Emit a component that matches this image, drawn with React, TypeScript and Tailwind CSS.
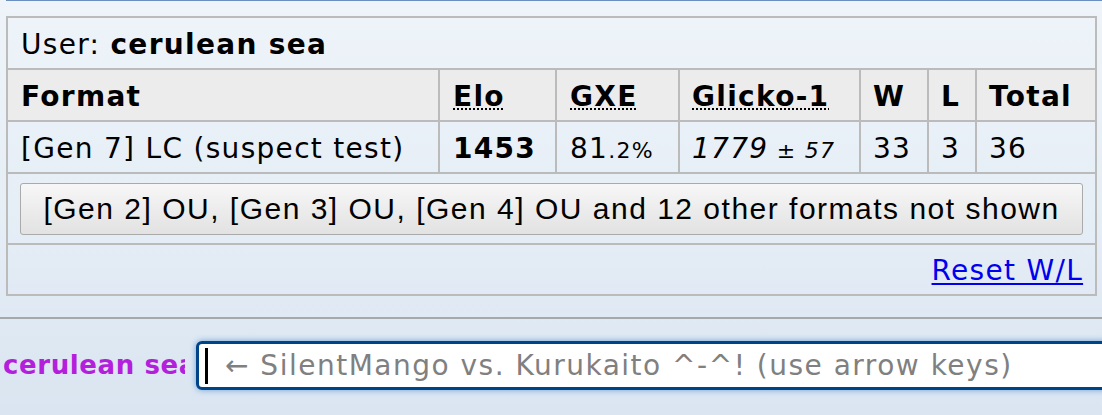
import React from "react";

const sans = { fontFamily: '"DejaVu Sans", Verdana, sans-serif' };

function Abbr({ children }: { children: React.ReactNode }) {
  return (
    <span className="underline decoration-dotted decoration-2 underline-offset-[3px]">{children}</span>
  );
}

export default function App() {
  return (
    <div
      className="relative h-[415px] w-[1102px] overflow-hidden bg-gradient-to-b from-[#eef4f9] via-[#e6eef6] to-[#dae5f1] text-[28px] tracking-[1.3px] text-black"
      style={sans}
    >
      {/* tail of the previous message box */}
      <div className="ml-[6px] h-px bg-[#6b8fc0]" />

      {/* ladder table */}
      <table className="ml-[6px] mt-[15px] w-[1089px] table-fixed border-collapse border-2 border-[#bbbbbb]">
        <colgroup>
          <col className="w-[432px]" />
          <col className="w-[117px]" />
          <col className="w-[123px]" />
          <col className="w-[181px]" />
          <col className="w-[68px]" />
          <col className="w-[48px]" />
          <col className="w-[120px]" />
        </colgroup>
        <tbody>
          <tr className="h-[52px]">
            <td colSpan={7} className="border-2 border-[#bbbbbb] px-[13px] pt-[3px] leading-none">
              User: <strong>cerulean sea</strong>
            </td>
          </tr>
          <tr className="h-[52px] bg-[#ececec] font-bold">
            <th className="border-2 border-[#bbbbbb] px-[13px] pt-[3px] text-left">Format</th>
            <th className="border-2 border-[#bbbbbb] px-[13px] pt-[3px] text-left"><Abbr>Elo</Abbr></th>
            <th className="border-2 border-[#bbbbbb] px-[13px] pt-[3px] text-left"><Abbr>GXE</Abbr></th>
            <th className="border-2 border-[#bbbbbb] px-[12px] pt-[3px] text-left"><Abbr>Glicko-1</Abbr></th>
            <th className="border-2 border-[#bbbbbb] px-[12px] pt-[3px] text-left">W</th>
            <th className="border-2 border-[#bbbbbb] px-[12px] pt-[3px] text-left">L</th>
            <th className="border-2 border-[#bbbbbb] px-[12px] pt-[3px] text-left">Total</th>
          </tr>
          <tr className="h-[52px] whitespace-nowrap">
            <td className="border-2 border-[#bbbbbb] px-[13px] pt-[3px]">[Gen 7] LC (suspect test)</td>
            <td className="border-2 border-[#bbbbbb] px-[13px] pt-[3px] font-bold">1453</td>
            <td className="border-2 border-[#bbbbbb] px-[13px] pt-[3px]">
              81<span className="text-[22px]">.2%</span>
            </td>
            <td className="border-2 border-[#bbbbbb] px-[12px] pt-[3px] italic">
              1779<span className="text-[22px]"> ± 57</span>
            </td>
            <td className="border-2 border-[#bbbbbb] px-[12px] pt-[3px]">33</td>
            <td className="border-2 border-[#bbbbbb] px-[12px] pt-[3px]">3</td>
            <td className="border-2 border-[#bbbbbb] px-[12px] pt-[3px]">36</td>
          </tr>
          <tr className="h-[71px]">
            <td colSpan={7} className="border-2 border-[#bbbbbb] px-[12px]">
              <button
                className="flex h-[52px] w-full items-center justify-center rounded-[3px] border border-[#aaaaaa] bg-gradient-to-b from-[#f7f7f7] to-[#e2e2e2] text-[30px] tracking-[1.5px] text-black"
                style={{ fontFamily: '"Liberation Sans", Arial, sans-serif' }}
              >
                [Gen 2] OU, [Gen 3] OU, [Gen 4] OU and 12 other formats not shown
              </button>
            </td>
          </tr>
          <tr className="h-[51px]">
            <td colSpan={7} className="border-2 border-[#bbbbbb] px-[12px] pt-[2px] text-right">
              <a href="#" className="text-[#0000ee] underline underline-offset-[3px]">
                Reset W/L
              </a>
            </td>
          </tr>
        </tbody>
      </table>

      {/* divider between log and composer */}
      <div className="mt-[21px] h-[2px] bg-[#a8a8a8]" />

      {/* chat composer */}
      <div className="mt-[22px] flex items-center">
        <div className="w-[185px] shrink-0 overflow-hidden whitespace-nowrap pl-[3px] text-[26px] font-bold tracking-[0.6px] text-[#b41fdc]">
          cerulean sea
        </div>
        <div className="ml-[11px] flex h-[49px] w-[940px] shrink-0 items-center rounded-[6px] border-[3px] border-[#004488] bg-white pl-[6px] shadow-[0_0_6px_#6f9fd8]">
          <span className="mr-[17px] h-[36px] w-[3px] bg-black" />
          <span className="whitespace-nowrap text-[28px] tracking-[1.5px] text-[#808080]">
            ← SilentMango vs. Kurukaito ^-^! (use arrow keys)
          </span>
        </div>
      </div>
    </div>
  );
}
